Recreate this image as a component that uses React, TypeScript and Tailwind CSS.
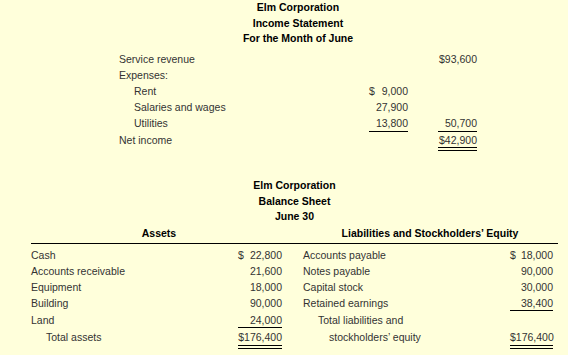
const bodyText = "text-[#333333]";

function Money({ sign, value }: { sign?: boolean; value: string }) {
  return (
    <div className="flex justify-between">
      <span>{sign ? "$" : ""}</span>
      <span>{value}</span>
    </div>
  );
}

function DoubleRule() {
  return <div className="h-[4px] border-y border-black" />;
}

function IncomeStatement() {
  return (
    <div className="ml-[119px] w-[358px]">
      <div className="text-center font-bold leading-[15.5px] text-black">
        <div>Elm Corporation</div>
        <div>Income Statement</div>
        <div>For the Month of June</div>
      </div>
      <div className={`mt-[4.5px] grid grid-cols-[250px_39px_30px_39px] leading-[16px] ${bodyText}`}>
        <div className="h-[16px]">Service revenue</div>
        <div />
        <div />
        <div className="text-right">$93,600</div>

        <div className="h-[16px]">Expenses:</div>
        <div />
        <div />
        <div />

        <div className="h-[16px] pl-[15px]">Rent</div>
        <Money sign value="9,000" />
        <div />
        <div />

        <div className="h-[16px] pl-[15px]">Salaries and wages</div>
        <div className="text-right">27,900</div>
        <div />
        <div />

        <div className="h-[16px] pl-[15px]">Utilities</div>
        <div className="h-[17px] border-b border-black text-right">13,800</div>
        <div />
        <div className="h-[17px] border-b border-black text-right">50,700</div>

        <div className="h-[16px]">Net income</div>
        <div />
        <div />
        <div>
          <div className="h-[15px] text-right">$42,900</div>
          <DoubleRule />
        </div>
      </div>
    </div>
  );
}

type Row = { label: string; value: string; sign?: boolean; indent?: string };

const assets: Row[] = [
  { label: "Cash", value: "22,800", sign: true },
  { label: "Accounts receivable", value: "21,600" },
  { label: "Equipment", value: "18,000" },
  { label: "Building", value: "90,000" },
  { label: "Land", value: "24,000" },
];

const liabilities: Row[] = [
  { label: "Accounts payable", value: "18,000", sign: true },
  { label: "Notes payable", value: "90,000" },
  { label: "Capital stock", value: "30,000" },
  { label: "Retained earnings", value: "38,400" },
  { label: "Total liabilities and", value: "", indent: "pl-[15px]" },
];

function Side({ rows, ruleAt, valueWidth, totalLabel, totalIndent }: { rows: Row[]; ruleAt: number; valueWidth: string; totalLabel: string; totalIndent: string }) {
  return (
    <div className="flex flex-col leading-[16px]">
      {rows.map((r, i) => (
        <div key={r.label} className={`flex justify-between ${i === 4 ? "h-[17px] pt-[1px]" : "h-[16px]"}`}>
          <span className={r.indent ?? ""}>{r.label}</span>
          <div className={`${valueWidth} ${i === ruleAt ? "border-b border-black" : ""}`}>
            {r.value && <Money sign={r.sign} value={r.value} />}
          </div>
        </div>
      ))}
      <div className="flex justify-between">
        <span className={`${totalIndent} pt-[1px]`}>{totalLabel}</span>
        <div className={valueWidth}>
          <div className="h-[17px] pt-[1px] text-right">$176,400</div>
          <DoubleRule />
        </div>
      </div>
    </div>
  );
}

function BalanceSheet() {
  return (
    <div className="ml-[31px] mt-[27px] w-[527px]">
      <div className="text-center font-bold leading-[15.5px] text-black">
        <div>Elm Corporation</div>
        <div>Balance Sheet</div>
        <div>June 30</div>
      </div>
      <div className="flex h-[19px] items-center border-b border-black pr-[5px] font-bold text-black">
        <div className="w-[251px] pl-[5px] text-center">Assets</div>
        <div className="ml-[21px] w-[250px] pl-[4px] text-center">Liabilities and Stockholders’ Equity</div>
      </div>
      <div className={`mt-[3px] flex pr-[5px] ${bodyText}`}>
        <div className="w-[251px]">
          <Side rows={assets} ruleAt={4} valueWidth="w-[44px]" totalLabel="Total assets" totalIndent="pl-[15px]" />
        </div>
        <div className="ml-[21px] w-[250px]">
          <Side rows={liabilities} ruleAt={3} valueWidth="w-[43px]" totalLabel="stockholders’ equity" totalIndent="pl-[26px]" />
        </div>
      </div>
    </div>
  );
}

export default function App() {
  return (
    <div className="h-[355px] w-[568px] overflow-hidden bg-[#ffffdb] font-['Liberation_Sans',Arial,sans-serif] text-[10.5px]">
      <IncomeStatement />
      <BalanceSheet />
    </div>
  );
}
